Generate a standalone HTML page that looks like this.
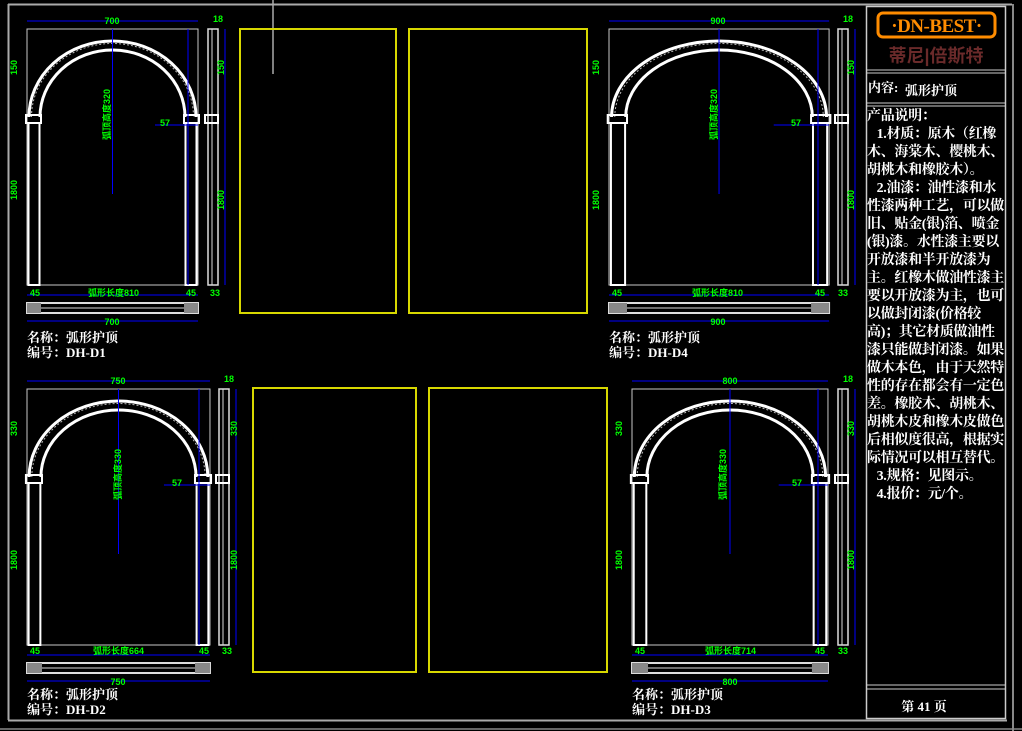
<!DOCTYPE html>
<html><head><meta charset="utf-8">
<style>
html,body{margin:0;padding:0;background:#000;}
body{width:1022px;height:731px;overflow:hidden;position:relative;font-family:"Liberation Serif","Noto Serif CJK SC","Noto Sans CJK SC",serif;}
svg{position:absolute;left:0;top:0;}
.g{fill:#00ff00;font-family:"Liberation Sans","Noto Sans CJK SC",sans-serif;font-size:9px;font-weight:bold;}
.w{fill:#fff;font-family:"Liberation Serif","Noto Serif CJK SC",serif;font-size:13px;font-weight:bold;}
#panel{position:absolute;left:867px;top:108px;width:140px;color:#fff;font-size:14px;line-height:18px;font-weight:bold;font-family:"Liberation Serif","Noto Serif CJK SC",serif;letter-spacing:-0.3px;}
</style></head><body>
<svg width="1022" height="731" viewBox="0 0 1022 731">
<defs>
<g id="arch">
 <rect x="0" y="0" width="171" height="256" fill="none" stroke="#c8c8c8" stroke-width="1" vector-effect="non-scaling-stroke"/>
 <path d="M2 88 A83.5 76 0 0 1 169 88" fill="none" stroke="#fff" stroke-width="3" vector-effect="non-scaling-stroke"/>
 <path d="M4.5 88 A81 73.5 0 0 1 166.5 88" fill="none" stroke="#bbb" stroke-width="1" stroke-dasharray="2 2" vector-effect="non-scaling-stroke"/>
 <path d="M13 88 A72.5 67 0 0 1 158 88" fill="none" stroke="#fff" stroke-width="3" vector-effect="non-scaling-stroke"/>
 <rect x="-1" y="86" width="15" height="8" fill="none" stroke="#fff" stroke-width="2" vector-effect="non-scaling-stroke"/>
 <rect x="157" y="86" width="15" height="8" fill="none" stroke="#fff" stroke-width="2" vector-effect="non-scaling-stroke"/>
 <rect x="1.5" y="94" width="11" height="162" fill="none" stroke="#fff" stroke-width="2" vector-effect="non-scaling-stroke"/>
 <rect x="158.5" y="94" width="11" height="162" fill="none" stroke="#fff" stroke-width="2" vector-effect="non-scaling-stroke"/>
 <line x1="85.5" y1="0" x2="85.5" y2="165" stroke="#0000ff" stroke-width="1" vector-effect="non-scaling-stroke"/>
 <line x1="128" y1="96" x2="171" y2="96" stroke="#0000ff" stroke-width="1" vector-effect="non-scaling-stroke"/>
 <line x1="0" y1="266" x2="171" y2="266" stroke="#0000ff" stroke-width="1" vector-effect="non-scaling-stroke"/>
 <line x1="0" y1="-8" x2="171" y2="-8" stroke="#0000ff" stroke-width="1" vector-effect="non-scaling-stroke"/>
 <rect x="0" y="274" width="171" height="10" fill="none" stroke="#ddd" stroke-width="2" vector-effect="non-scaling-stroke"/>
 <line x1="0" y1="279" x2="171" y2="279" stroke="#ddd" stroke-width="1" vector-effect="non-scaling-stroke"/>
 <rect x="0" y="274" width="14" height="10" fill="#888" vector-effect="non-scaling-stroke"/>
 <rect x="157" y="274" width="14" height="10" fill="#888" vector-effect="non-scaling-stroke"/>
 <line x1="0" y1="292" x2="171" y2="292" stroke="#0000ff" stroke-width="1" vector-effect="non-scaling-stroke"/>
</g>
<g id="side">
 <rect x="0" y="0" width="10" height="256" fill="none" stroke="#ddd" stroke-width="1.5"/>
 <line x1="4" y1="0" x2="4" y2="256" stroke="#ddd" stroke-width="1"/>
 <rect x="-3" y="86" width="13" height="8" fill="none" stroke="#fff" stroke-width="2"/>
 <line x1="17" y1="0" x2="17" y2="256" stroke="#0000ff"/>
 <line x1="-20" y1="0" x2="-20" y2="256" stroke="#0000ff"/>
</g>
</defs>
<line x1="8" y1="4.5" x2="1012" y2="4.5" stroke="#aaa" stroke-width="2"/>
<line x1="8.5" y1="4" x2="8.5" y2="720" stroke="#aaa" stroke-width="2"/>
<line x1="8" y1="720.5" x2="1007" y2="720.5" stroke="#aaa" stroke-width="2"/>
<line x1="0" y1="729" x2="1022" y2="729" stroke="#666" stroke-width="2"/>
<line x1="1013" y1="4" x2="1013" y2="731" stroke="#888" stroke-width="2"/>
<line x1="273" y1="0" x2="273" y2="74" stroke="#aaa" stroke-width="1.5"/>
<rect x="866.5" y="6.5" width="139" height="712" fill="none" stroke="#ccc" stroke-width="1.5"/>
<line x1="866" y1="70" x2="1006" y2="70" stroke="#ccc"/><line x1="866" y1="73" x2="1006" y2="73" stroke="#ccc"/>
<line x1="866" y1="103" x2="1006" y2="103" stroke="#ccc"/><line x1="866" y1="106" x2="1006" y2="106" stroke="#ccc"/>
<line x1="866" y1="685" x2="1006" y2="685" stroke="#ccc"/><line x1="866" y1="689" x2="1006" y2="689" stroke="#ccc"/>
<rect x="878" y="13" width="117" height="24" rx="5" fill="none" stroke="#ff8c00" stroke-width="3"/>
<text x="936.5" y="32" text-anchor="middle" fill="#ff8c00" font-family="Liberation Serif,serif" font-size="19" font-weight="bold" letter-spacing="-0.5">·DN-BEST·</text>
<text x="936" y="62" text-anchor="middle" fill="#6a2a2a" font-family="Liberation Sans,Noto Sans CJK SC,sans-serif" font-size="18" font-weight="bold">蒂尼|倍斯特</text>
<text x="868" y="92" class="w" font-size="11">内容:</text>
<text x="905" y="95" class="w" font-size="15">弧形护顶</text>
<text x="924" y="711" class="w" text-anchor="middle" font-size="14">第 41 页</text>
<g fill="none" stroke="#d8d800" stroke-width="2">
<rect x="240" y="29" width="156" height="284"/><rect x="409" y="29" width="178" height="284"/>
<rect x="253" y="388" width="163" height="284"/><rect x="429" y="388" width="178" height="284"/>
</g>
<use href="#arch" transform="translate(27,29)"/>
<use href="#arch" transform="translate(609,29) scale(1.287,1)"/>
<use href="#arch" transform="translate(27,389) scale(1.07,1)"/>
<use href="#arch" transform="translate(632,389) scale(1.146,1)"/>
<use href="#side" transform="translate(208,29)"/>
<use href="#side" transform="translate(838,29)"/>
<use href="#side" transform="translate(219,389)"/>
<use href="#side" transform="translate(838,389)"/>
<g class="g">
<text x="112" y="24" text-anchor="middle">700</text><text x="112" y="325" text-anchor="middle">700</text>
<text x="718" y="24" text-anchor="middle">900</text><text x="718" y="325" text-anchor="middle">900</text>
<text x="118" y="384" text-anchor="middle">750</text><text x="118" y="685" text-anchor="middle">750</text>
<text x="730" y="384" text-anchor="middle">800</text><text x="730" y="685" text-anchor="middle">800</text>
<text x="213" y="22">18</text><text x="843" y="22">18</text><text x="224" y="382">18</text><text x="843" y="382">18</text>
<text x="30" y="296">45</text><text x="186" y="296">45</text><text x="210" y="296">33</text>
<text x="88" y="296">弧形长度810</text>
<text x="612" y="296">45</text><text x="815" y="296">45</text><text x="838" y="296">33</text><text x="692" y="296">弧形长度810</text>
<text x="30" y="654">45</text><text x="199" y="654">45</text><text x="222" y="654">33</text><text x="93" y="654">弧形长度664</text>
<text x="635" y="654">45</text><text x="815" y="654">45</text><text x="838" y="654">33</text><text x="705" y="654">弧形长度714</text>
<text x="160" y="126">57</text><text x="791" y="126">57</text><text x="172" y="486">57</text><text x="792" y="486">57</text>
<text x="17" y="75" transform="rotate(-90 17 75)">150</text><text x="17" y="200" transform="rotate(-90 17 200)">1800</text>
<text x="224" y="75" transform="rotate(-90 224 75)">150</text><text x="224" y="210" transform="rotate(-90 224 210)">1800</text>
<text x="599" y="75" transform="rotate(-90 599 75)">150</text><text x="599" y="210" transform="rotate(-90 599 210)">1800</text>
<text x="854" y="75" transform="rotate(-90 854 75)">150</text><text x="854" y="210" transform="rotate(-90 854 210)">1800</text>
<text x="17" y="436" transform="rotate(-90 17 436)">330</text><text x="17" y="570" transform="rotate(-90 17 570)">1800</text>
<text x="237" y="436" transform="rotate(-90 237 436)">330</text><text x="237" y="570" transform="rotate(-90 237 570)">1800</text>
<text x="622" y="436" transform="rotate(-90 622 436)">330</text><text x="622" y="570" transform="rotate(-90 622 570)">1800</text>
<text x="854" y="436" transform="rotate(-90 854 436)">330</text><text x="854" y="570" transform="rotate(-90 854 570)">1800</text>
<text x="110" y="140" transform="rotate(-90 110 140)">弧顶高度320</text>
<text x="717" y="140" transform="rotate(-90 717 140)">弧顶高度320</text>
<text x="121" y="500" transform="rotate(-90 121 500)">弧顶高度330</text>
<text x="726" y="500" transform="rotate(-90 726 500)">弧顶高度330</text>
</g>
<g class="w">
<text x="27" y="342">名称：弧形护顶</text><text x="27" y="357">编号：DH-D1</text>
<text x="609" y="342">名称：弧形护顶</text><text x="609" y="357">编号：DH-D4</text>
<text x="27" y="699">名称：弧形护顶</text><text x="27" y="714">编号：DH-D2</text>
<text x="632" y="699">名称：弧形护顶</text><text x="632" y="714">编号：DH-D3</text>
</g>
</svg>
<div id="panel">产品说明：<br>&nbsp;&nbsp;&nbsp;1.材质：原木（红橡木、海棠木、樱桃木、胡桃木和橡胶木）。<br>&nbsp;&nbsp;&nbsp;2.油漆：油性漆和水性漆两种工艺，可以做旧、贴金(银)箔、喷金(银)漆。水性漆主要以开放漆和半开放漆为主。红橡木做油性漆主要以开放漆为主，也可以做封闭漆(价格较高)；其它材质做油性漆只能做封闭漆。如果做木本色，由于天然特性的存在都会有一定色差。橡胶木、胡桃木、胡桃木皮和橡木皮做色后相似度很高，根据实际情况可以相互替代。<br>&nbsp;&nbsp;&nbsp;3.规格：见图示。<br>&nbsp;&nbsp;&nbsp;4.报价：元/个。</div>
</body></html>
